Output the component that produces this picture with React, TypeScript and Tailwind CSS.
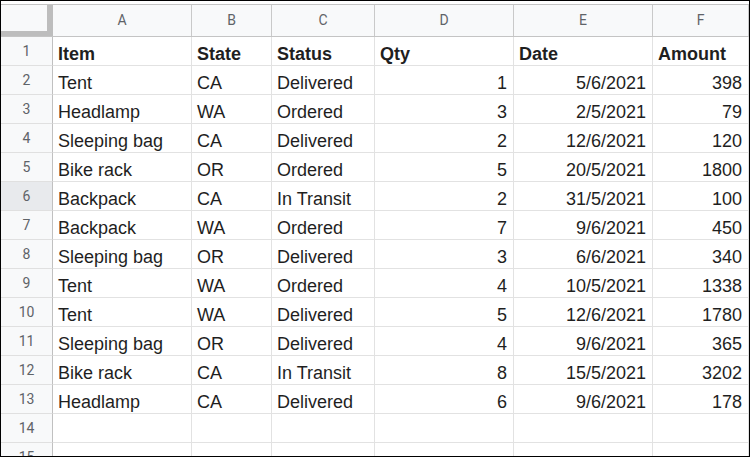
const columns = ["A", "B", "C", "D", "E", "F"];

const rows: string[][] = [
  ["Item", "State", "Status", "Qty", "Date", "Amount"],
  ["Tent", "CA", "Delivered", "1", "5/6/2021", "398"],
  ["Headlamp", "WA", "Ordered", "3", "2/5/2021", "79"],
  ["Sleeping bag", "CA", "Delivered", "2", "12/6/2021", "120"],
  ["Bike rack", "OR", "Ordered", "5", "20/5/2021", "1800"],
  ["Backpack", "CA", "In Transit", "2", "31/5/2021", "100"],
  ["Backpack", "WA", "Ordered", "7", "9/6/2021", "450"],
  ["Sleeping bag", "OR", "Delivered", "3", "6/6/2021", "340"],
  ["Tent", "WA", "Ordered", "4", "10/5/2021", "1338"],
  ["Tent", "WA", "Delivered", "5", "12/6/2021", "1780"],
  ["Sleeping bag", "OR", "Delivered", "4", "9/6/2021", "365"],
  ["Bike rack", "CA", "In Transit", "8", "15/5/2021", "3202"],
  ["Headlamp", "CA", "Delivered", "6", "9/6/2021", "178"],
  ["", "", "", "", "", ""],
  ["", "", "", "", "", ""],
];

// numbers and dates sit on the right, like a real sheet
const isNumeric = (v: string) => /^[0-9/]+$/.test(v);

const gridCols = "grid grid-cols-[52px_139px_80px_103px_139px_139px_96px]";

export default function App() {
  return (
    <div className="w-[750px] h-[457px] overflow-hidden border border-black bg-white font-['Liberation_Sans',Arial,sans-serif]">
      <div className="h-[3px] bg-white" />

      {/* column letters */}
      <div className={`${gridCols} h-[33px] border-t border-b border-[#c4c4c4] bg-[#f8f9fa]`}>
        <div className="relative border-r-[6px] border-[#bdbdbd]">
          <div className="absolute left-0 right-0 bottom-0 h-[5px] bg-[#bdbdbd]" />
        </div>
        {columns.map((c) => (
          <div
            key={c}
            className="flex items-center justify-center border-r border-[#c9c9c9] text-[14px] text-[#5f6368] font-['Roboto',sans-serif]"
          >
            {c}
          </div>
        ))}
      </div>

      {rows.map((row, i) => (
        <div key={i} className={`${gridCols} h-[29px]`}>
          <div
            className={`flex items-center justify-center border-r border-b border-r-[#c0c0c0] border-b-[#e0e0e0] text-[14px] text-[#5f6368] font-['Roboto',sans-serif] ${
              i === 5 ? "bg-[#e8eaed]" : "bg-[#f8f9fa]"
            }`}
          >
            {i + 1}
          </div>
          {row.map((v, j) => (
            <div
              key={j}
              className={`flex items-end pb-[1px] px-[5px] border-r border-b border-[#e2e2e2] text-[18px] leading-[20px] text-[#1f1f1f] whitespace-nowrap overflow-hidden ${
                i === 0 ? "font-bold" : ""
              } ${i > 0 && isNumeric(v) ? "justify-end pr-[6px]" : "justify-start"}`}
            >
              {v}
            </div>
          ))}
        </div>
      ))}
    </div>
  );
}
